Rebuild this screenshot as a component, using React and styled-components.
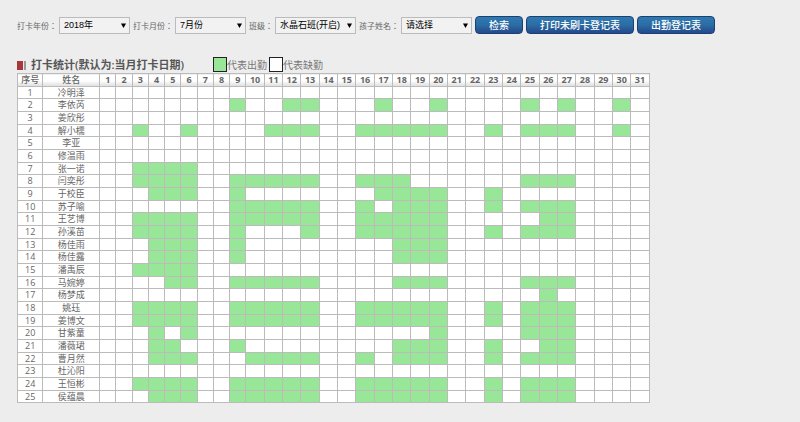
import React, { useState } from "react";
import styled, { createGlobalStyle } from "styled-components";

const GlobalStyle = createGlobalStyle`
  * {
    box-sizing: border-box;
  }

  body {
    margin: 0;
    background-color: #ededed;
    color: #666;
    font-family: "Open Sans", "Noto Sans CJK SC", sans-serif;
    font-size: 8px;
  }
`;

const Page = styled.main`
  padding: 16px 17px;
`;

const Toolbar = styled.form`
  display: flex;
  flex-wrap: wrap;
  align-items: center;
  gap: 3px;
`;

const Field = styled.div`
  display: flex;
  align-items: center;
  gap: 2px;
  color: #666;
  line-height: 17px;

  label {
    font-family: "Noto Sans CJK TC", sans-serif;
  }
`;

const SelectBox = styled.div`
  display: grid;
  position: relative;
  width: ${(props) => (props.$wide ? "81px" : "71px")};

  svg {
    position: absolute;
    right: 4px;
    top: 6px;
    pointer-events: none;
  }
`;

const Select = styled.select`
  appearance: none;
  width: 100%;
  height: 17px;
  padding: 0 4px;
  border: 1px solid #bbb;
  border-radius: 0;
  background-color: #f2f2f2;
  color: #000;
  font-family: "Liberation Sans", "Noto Sans CJK SC", sans-serif;
  font-size: 9px;
`;

const Button = styled.button`
  height: 18px;
  padding: 0 13px;
  border: 1px solid #1c3f74;
  border-radius: 4px;
  background: linear-gradient(#2f7ab0, #2b6ca5 50%, #24498a);
  color: #fff;
  font-family: inherit;
  font-size: 10px;
  font-weight: 500;
  line-height: 16px;
  cursor: pointer;
`;

const Heading = styled.div`
  display: flex;
  flex-wrap: wrap;
  align-items: center;
  margin-top: 23px;
`;

const Marker = styled.span`
  width: 9px;
  height: 9px;
  margin-right: 5px;
  border-right: 2px solid #999;
  background: linear-gradient(to right, #a93638 6px, #ededed 6px);
`;

const Title = styled.h1`
  margin: 0 29px 0 0;
  color: #555;
  font-size: 11px;
  font-weight: 600;
  line-height: 16px;
`;

const Legend = styled.span`
  display: flex;
  align-items: flex-start;
  margin-right: 2px;
  color: #777;
  font-size: 10px;
  line-height: 16px;

  &::before {
    content: "";
    width: 12px;
    height: 13px;
    border: 1px solid #222;
    background-color: ${(props) => props.$color};
  }
`;

const Table = styled.table`
  table-layout: fixed;
  width: 82.6%;
  border-collapse: collapse;
  background-color: #fff;
  text-align: center;
  font-size: 9px;
  line-height: 10px;

  th,
  td {
    padding: 0;
    border: 1px solid #bbb;
    white-space: nowrap;
  }

  th {
    background: linear-gradient(#fff 50%, #ddd);
    font-weight: 700;
  }

  thead tr,
  tbody tr {
    height: 13px;
  }

  tbody tr:nth-child(3n + 1) {
    height: 12px;
  }
`;

const Col = styled.col`
  width: ${(props) => props.$width};
`;

const HeadText = styled.th`
  && {
    font-weight: 500;
  }
`;

const Day = styled.td`
  background-color: ${(props) => (props.$present ? "#98e698" : "#fff")};
`;

const days = Array.from({ length: 31 }, (_, i) => i + 1);

const children = [
  { name: "冷明泽", present: [] },
  { name: "李依芮", present: [9, 12, 13, 17, 20, 25, 27, 30] },
  { name: "姜欣彤", present: [] },
  { name: "解小檽", present: [3, 6, 11, 12, 13, 16, 17, 18, 19, 20, 23, 25, 26, 27, 30] },
  { name: "李亚", present: [] },
  { name: "修温雨", present: [] },
  { name: "张一诺", present: [3, 4, 5, 6] },
  { name: "闫奕彤", present: [3, 4, 5, 6, 9, 10, 11, 12, 13, 16, 17, 18, 25, 26, 27] },
  { name: "于校臣", present: [4, 5, 6, 9, 17, 18, 19, 20, 23] },
  { name: "苏子喻", present: [9, 10, 11, 12, 13, 16, 18, 19, 20, 23, 25, 26, 27] },
  { name: "王艺博", present: [3, 4, 5, 6, 9, 10, 11, 12, 13, 16, 17, 18, 19, 20, 26, 27] },
  { name: "孙溪苗", present: [3, 4, 5, 6, 9, 13, 16, 17, 18, 19, 20, 23, 25, 26, 27] },
  { name: "杨佳雨", present: [4, 5, 6, 9, 18, 19, 20] },
  { name: "杨佳露", present: [4, 5, 6, 9, 18, 19, 20] },
  { name: "潘禹辰", present: [3, 4, 5, 6] },
  { name: "马婉婷", present: [5, 6, 9, 10, 11, 12, 13, 18, 19, 20, 25, 26, 27] },
  { name: "杨梦成", present: [26] },
  { name: "姚珏", present: [3, 4, 5, 6, 9, 10, 11, 12, 13, 16, 17, 18, 19, 20, 23, 25, 26, 27] },
  { name: "姜博文", present: [3, 4, 5, 6, 9, 10, 11, 12, 13, 16, 17, 18, 19, 20, 23, 25, 26, 27] },
  { name: "甘紫童", present: [4, 6, 20, 25, 26, 27] },
  { name: "潘薇珺", present: [4, 5, 9, 18, 19, 20, 23, 26, 27] },
  { name: "曹月然", present: [4, 5, 6, 10, 11, 12, 13, 16, 18, 19, 20, 23, 25, 26, 27] },
  { name: "杜沁阳", present: [] },
  { name: "王恒彬", present: [3, 4, 5, 6, 9, 10, 11, 12, 13, 16, 17, 18, 19, 20, 23, 25, 26, 27] },
  { name: "侯蕴晨", present: [4, 5, 6, 9, 10, 11, 12, 13, 16, 17, 18, 19, 20, 23, 25, 26, 27] },
];

const filters = [
  { id: "year", label: "打卡年份：", options: ["2018年", "2017年"] },
  { id: "month", label: "打卡月份：", options: ["7月份", "6月份"] },
  { id: "group", label: "班级：", options: ["水晶石班(开启)"], wide: true },
  { id: "child", label: "孩子姓名：", options: ["请选择", ...children.map((child) => child.name)] },
];

const Filter = ({ id, label, options, wide }) => {
  const [value, setValue] = useState(options[0]);

  return (
    <Field>
      <label htmlFor={id}>{label}</label>
      <SelectBox $wide={wide}>
        <Select id={id} value={value} onChange={(e) => setValue(e.target.value)}>
          {options.map((option) => (
            <option key={option}>{option}</option>
          ))}
        </Select>
        <svg width="5" height="5" viewBox="0 0 5 5" aria-hidden="true">
          <path d="M0 0.5H5L2.5 5Z" fill="#000" />
        </svg>
      </SelectBox>
    </Field>
  );
};

export default function App() {
  return (
    <Page>
      <GlobalStyle />
      <Toolbar onSubmit={(e) => e.preventDefault()}>
        {filters.map((filter) => (
          <Filter key={filter.id} {...filter} />
        ))}
        <Button type="submit">检索</Button>
        <Button type="button">打印未刷卡登记表</Button>
        <Button type="button">出勤登记表</Button>
      </Toolbar>

      <Heading>
        <Marker />
        <Title>打卡统计(默认为:当月打卡日期)</Title>
        <Legend $color="#98e698">代表出勤</Legend>
        <Legend $color="#fff">代表缺勤</Legend>
      </Heading>

      <Table>
        <colgroup>
          <Col $width="4%" />
          <Col $width="9%" />
          {days.map((day) => (
            <Col key={day} $width={day < 10 ? "2.57%" : "2.9%"} />
          ))}
        </colgroup>
        <thead>
          <tr>
            <HeadText scope="col">序号</HeadText>
            <HeadText scope="col">姓名</HeadText>
            {days.map((day) => (
              <th key={day} scope="col">{day}</th>
            ))}
          </tr>
        </thead>
        <tbody>
          {children.map((child, index) => (
            <tr key={child.name}>
              <td>{index + 1}</td>
              <td>{child.name}</td>
              {days.map((day) => (
                <Day key={day} $present={child.present.includes(day)} />
              ))}
            </tr>
          ))}
        </tbody>
      </Table>
    </Page>
  );
}
